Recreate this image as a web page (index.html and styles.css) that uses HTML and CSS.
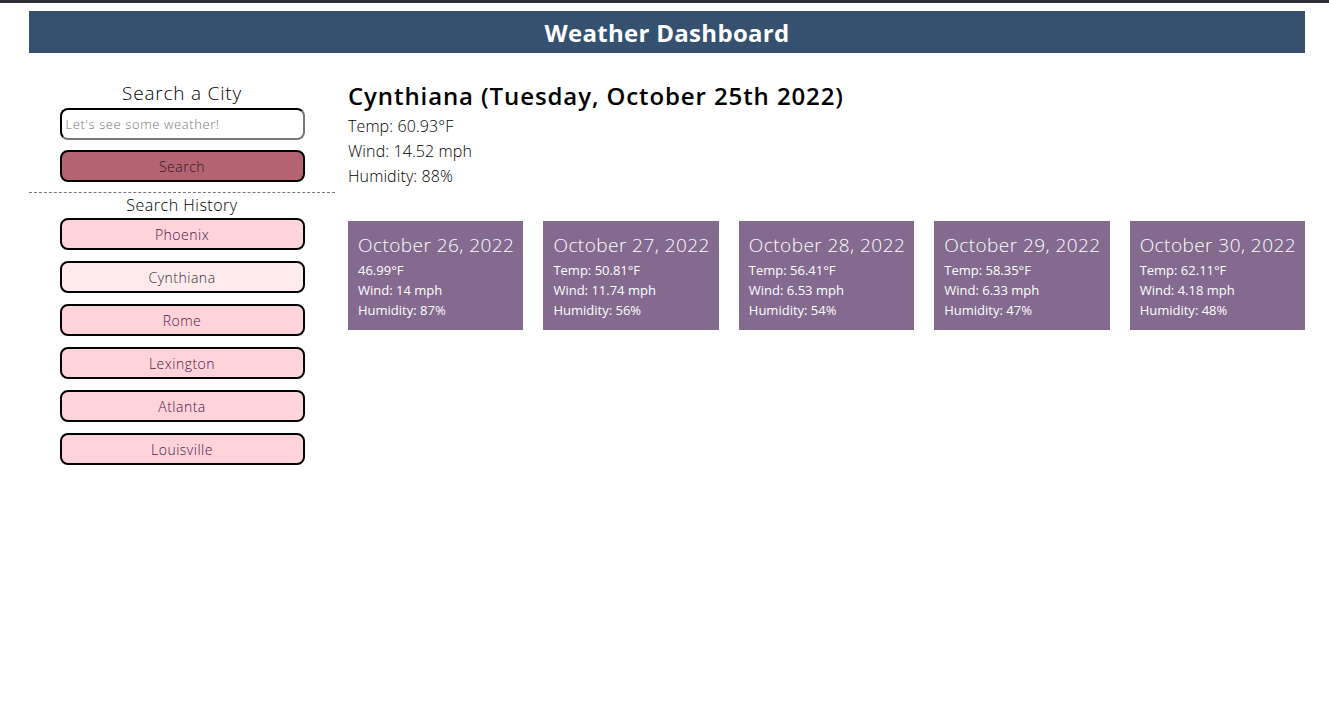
FILE: index.html
```html
<!DOCTYPE html>
<html lang="en">
<head>
<meta charset="utf-8">
<title>Weather Dashboard</title>
<link rel="stylesheet" href="styles.css">
</head>
<body>
<div class="topbar"></div>
<div class="page">
  <header class="header"><h1>Weather Dashboard</h1></header>
  <div class="content">
    <aside class="sidebar">
      <div class="search">
        <h2 class="search-title">Search a City</h2>
        <input class="city-input" type="text" placeholder="Let's see some weather!">
        <button class="btn btn-search">Search</button>
      </div>
      <div class="history">
        <h3 class="history-title">Search History</h3>
        <button class="btn btn-city">Phoenix</button>
        <button class="btn btn-city active">Cynthiana</button>
        <button class="btn btn-city">Rome</button>
        <button class="btn btn-city">Lexington</button>
        <button class="btn btn-city">Atlanta</button>
        <button class="btn btn-city">Louisville</button>
      </div>
    </aside>
    <main class="main">
      <section class="today">
        <h2 class="today-title">Cynthiana (Tuesday, October 25th 2022)</h2>
        <p>Temp: 60.93°F</p>
        <p>Wind: 14.52 mph</p>
        <p>Humidity: 88%</p>
      </section>
      <section class="forecast">
        <div class="card">
          <h3>October 26, 2022</h3>
          <p>46.99°F</p>
          <p>Wind: 14 mph</p>
          <p>Humidity: 87%</p>
        </div>
        <div class="card">
          <h3>October 27, 2022</h3>
          <p>Temp: 50.81°F</p>
          <p>Wind: 11.74 mph</p>
          <p>Humidity: 56%</p>
        </div>
        <div class="card">
          <h3>October 28, 2022</h3>
          <p>Temp: 56.41°F</p>
          <p>Wind: 6.53 mph</p>
          <p>Humidity: 54%</p>
        </div>
        <div class="card">
          <h3>October 29, 2022</h3>
          <p>Temp: 58.35°F</p>
          <p>Wind: 6.33 mph</p>
          <p>Humidity: 47%</p>
        </div>
        <div class="card">
          <h3>October 30, 2022</h3>
          <p>Temp: 62.11°F</p>
          <p>Wind: 4.18 mph</p>
          <p>Humidity: 48%</p>
        </div>
      </section>
    </main>
  </div>
</div>
</body>
</html>
```
FILE: styles.css
```css
* { box-sizing: border-box; }
html, body { margin: 0; padding: 0; background: #fff; }
body { font-family: "Open Sans", "DejaVu Sans", sans-serif; color: #000; }

.topbar { height: 3px; background: #2c3036; }

.page {
  width: 1276px;
  margin: 8px 0 0 29px;
}

.header {
  height: 42px;
  background: #36506f;
  display: flex;
  align-items: center;
  justify-content: center;
}
.header h1 {
  margin: 0;
  color: #fff;
  font-size: 24px;
  font-weight: 700;
  letter-spacing: 0.3px;
}

.content {
  display: flex;
  margin-top: 26px;
}

.sidebar {
  width: 306px;
  flex: none;
  display: flex;
  flex-direction: column;
  align-items: center;
}
.search {
  width: 100%;
  display: flex;
  flex-direction: column;
  align-items: center;
  border-bottom: 1px dashed #777;
  padding-bottom: 10px;
}
.search-title {
  margin: 0 0 1px;
  font-size: 19px;
  font-weight: 300;
  line-height: 28px;
  letter-spacing: 0.8px;
}
.city-input {
  width: 245px;
  height: 32px;
  border: 2px inset #555;
  border-color: #222 #777 #777 #222;
  border-radius: 8px;
  padding: 0 4px;
  font-family: inherit;
  font-size: 13px;
  font-weight: 300;
  letter-spacing: 0.6px;
}
.city-input::placeholder { color: #777; }

.btn {
  width: 245px;
  height: 32px;
  border: 2px solid #000;
  border-radius: 8px;
  font-family: inherit;
  font-size: 14px;
  font-weight: 300;
  letter-spacing: 0.5px;
  color: #222;
  cursor: pointer;
}
.btn-search {
  margin-top: 10px;
  background: #b46471;
  color: #2b1a22;
}

.history {
  display: flex;
  flex-direction: column;
  align-items: center;
}
.history-title {
  margin: 0 0 1px;
  font-size: 16px;
  font-weight: 300;
  line-height: 24px;
  letter-spacing: 0.5px;
}
.btn-city {
  background: #ffd3da;
  color: #4a1848;
  margin-bottom: 11px;
}
.btn-city.active { background: #ffeaee; color: #333; }

.main {
  flex: 1;
  min-width: 0;
  padding-left: 13px;
}
.today-title {
  margin: 1px 0 2px;
  font-size: 24px;
  font-weight: 600;
  line-height: 32px;
  letter-spacing: 0.9px;
}
.today p {
  margin: 0;
  font-size: 16px;
  font-weight: 300;
  line-height: 25px;
  letter-spacing: 0.1px;
}

.forecast {
  display: flex;
  gap: 20px;
  margin-top: 32px;
}
.card {
  flex: 1 1 0;
  min-width: 0;
  height: 109px;
  background: #836a8e;
  color: #fff;
  padding: 12px 10px;
}
.card h3 {
  margin: 0 0 3px;
  font-size: 19px;
  font-weight: 300;
  line-height: 24px;
  letter-spacing: 0.45px;
  white-space: nowrap;
}
.card p {
  margin: 0;
  font-size: 13px;
  font-weight: 400;
  line-height: 20px;
}
```
